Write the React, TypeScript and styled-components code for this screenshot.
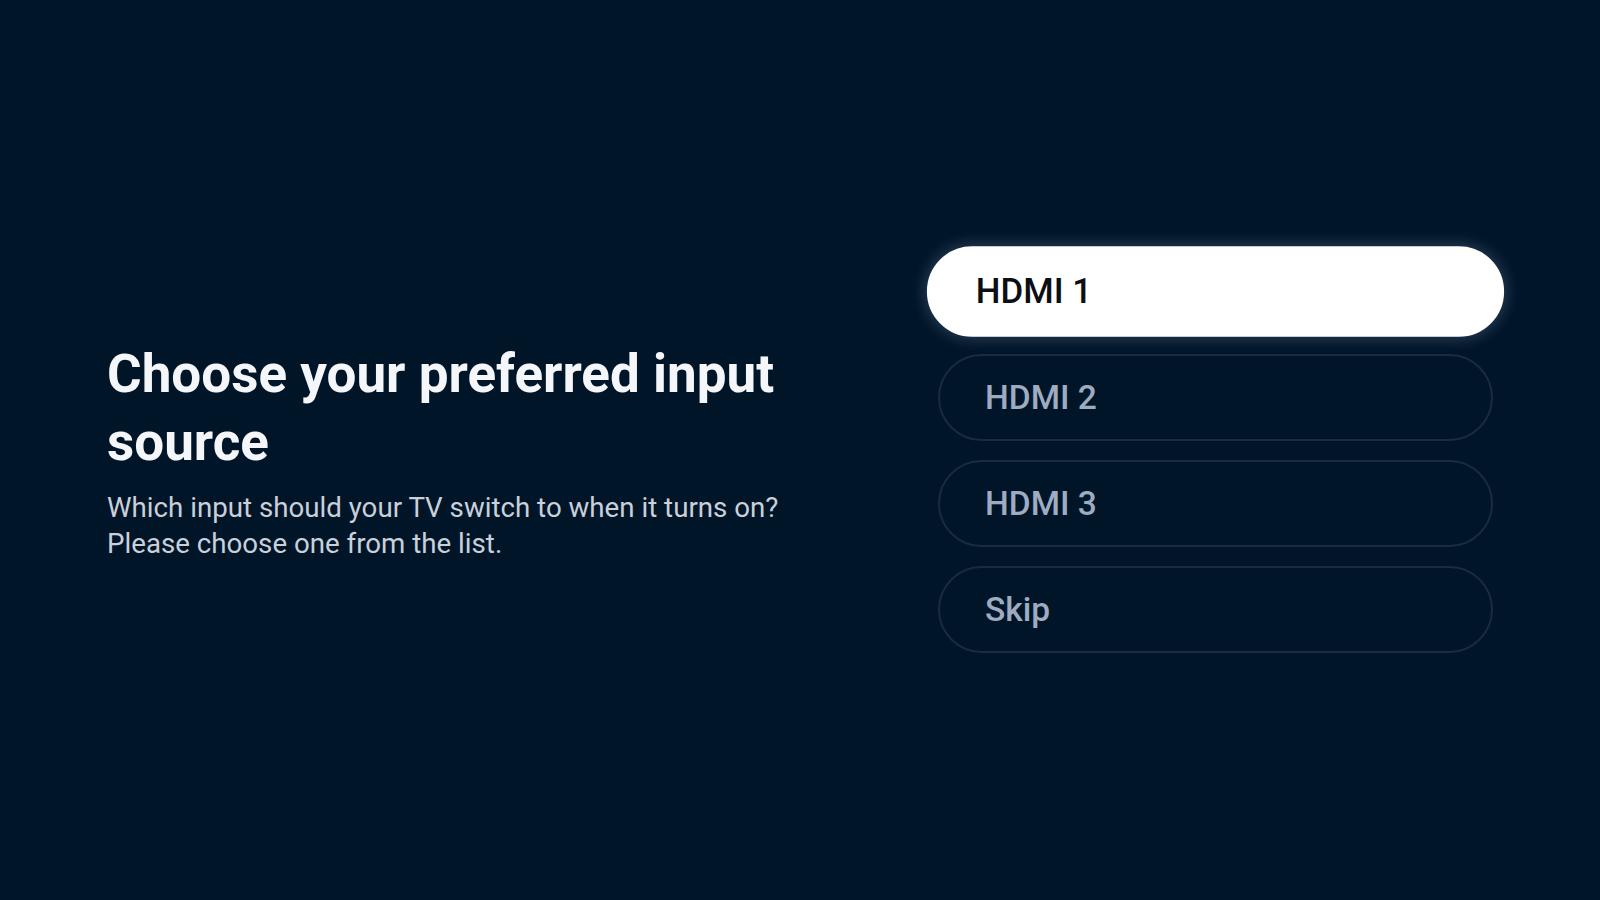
import React from 'react'
import styled, { createGlobalStyle } from 'styled-components'

const GlobalStyle = createGlobalStyle`
  html, body {
    margin: 0;
    padding: 0;
    background: #011529;
  }
  body {
    font-family: Roboto, "Noto Sans", "Liberation Sans", sans-serif;
  }
`

const Page = styled.div`
  height: 100vh;
  display: flex;
  align-items: center;
  justify-content: space-between;
  padding: 0 107px;
  box-sizing: border-box;
  background: #011529;
`

const Intro = styled.div`
  width: 730px;
  margin-top: 2px;
`

const Title = styled.h1`
  margin: 0 0 14px;
  color: #f4f6fa;
  font-size: 53px;
  font-weight: 700;
  line-height: 68px;
`

const Subtitle = styled.p`
  margin: 0;
  color: #c9d0da;
  font-size: 27.7px;
  font-weight: 400;
  line-height: 36px;
`

const List = styled.div`
  width: 555px;
  display: flex;
  flex-direction: column;
  gap: 19px;
`

const Option = styled.div<{ $focused?: boolean }>`
  height: 87px;
  box-sizing: border-box;
  display: flex;
  align-items: center;
  padding-left: 45px;
  border-radius: 44px;
  border: 2px solid ${({ $focused }) => ($focused ? '#ffffff' : '#1a2a3f')};
  background: ${({ $focused }) => ($focused ? '#ffffff' : 'transparent')};
  color: ${({ $focused }) => ($focused ? '#0b0f14' : '#9eabc0')};
  font-size: 33.5px;
  font-weight: 500;
  transform: ${({ $focused }) => ($focused ? 'scale(1.04)' : 'none')};
  box-shadow: ${({ $focused }) => ($focused ? '0 0 14px 2px rgba(190, 215, 255, 0.22)' : 'none')};
`

const options = ['HDMI 1', 'HDMI 2', 'HDMI 3', 'Skip']

const App: React.FC = () => {
  return (
    <>
      <GlobalStyle />
      <Page>
        <Intro>
          <Title>Choose your preferred input source</Title>
          <Subtitle>
            Which input should your TV switch to when it turns on?
            <br />
            Please choose one from the list.
          </Subtitle>
        </Intro>
        <List>
          {options.map((label, i) => (
            <Option key={label} $focused={i === 0}>
              {label}
            </Option>
          ))}
        </List>
      </Page>
    </>
  )
}

export default App
